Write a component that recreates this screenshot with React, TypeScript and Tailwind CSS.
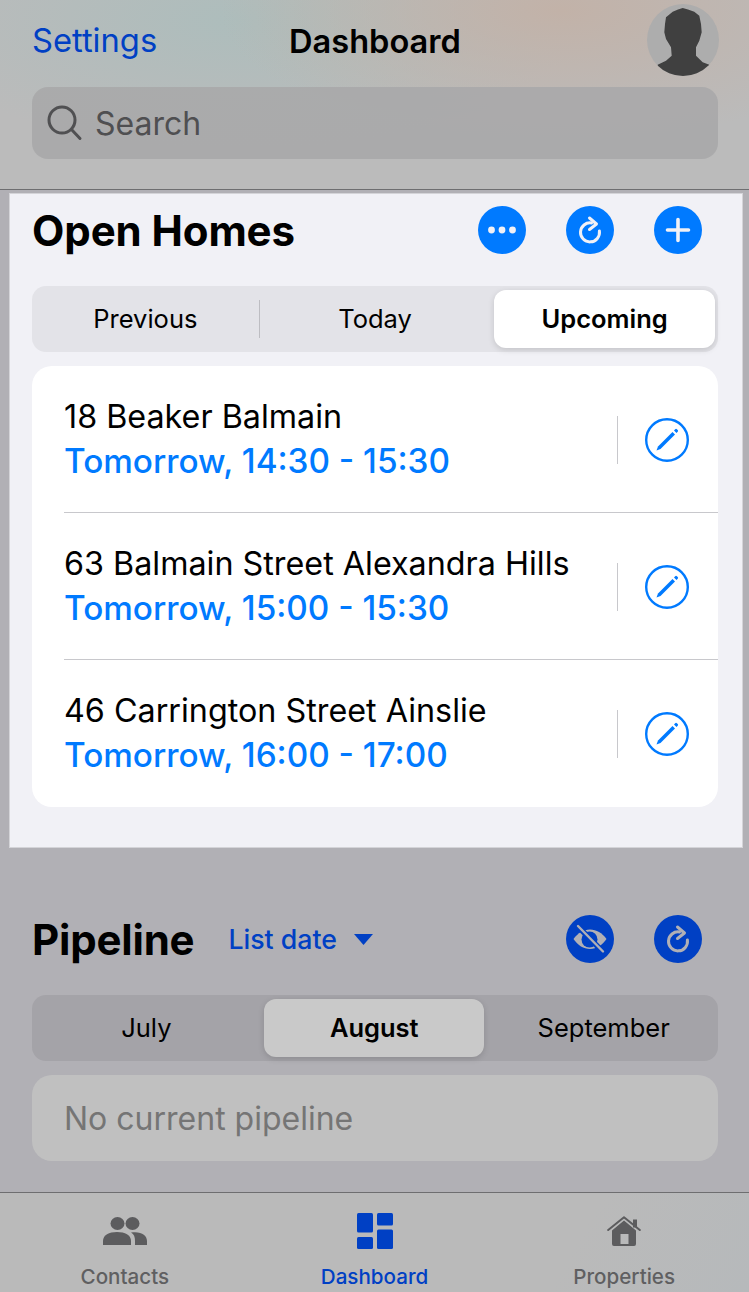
import React from "react";

const font = "font-['Inter','Liberation_Sans',sans-serif]";

const RefreshIcon = ({ color }: { color: string }) => (
  <svg width="48" height="48" viewBox="0 0 48 48" fill="none" stroke={color} strokeWidth="3" strokeLinecap="round" strokeLinejoin="round">
    <path d="M25.500 17A9.500 9.500 0 1 0 33.400 25" />
    <path d="M23.500 12 30.500 18 23.500 23.500" />
  </svg>
);

const DotsIcon = () => (
  <svg width="48" height="48" viewBox="0 0 48 48" fill="#f1f1f6">
    <circle cx="13.500" cy="24" r="3.400" />
    <circle cx="24" cy="24" r="3.400" />
    <circle cx="34.500" cy="24" r="3.400" />
  </svg>
);

const PlusIcon = () => (
  <svg width="48" height="48" viewBox="0 0 48 48" fill="none" stroke="#f1f1f6" strokeWidth="3.600" strokeLinecap="round">
    <path d="M24 13.500v21M13.500 24h21" />
  </svg>
);

const EyeOffIcon = () => (
  <svg width="48" height="48" viewBox="0 0 48 48" fill="none">
    <path d="M7.500 24C12 18 17.500 14.500 24 14.500S36 18 40.500 24C36 30.500 30.500 34 24 34S12 30.500 7.500 24Z" fill="#b1b0b5" />
    <circle cx="23.500" cy="24.500" r="8" fill="#0040c4" />
    <circle cx="23.500" cy="24.500" r="1.800" fill="#b1b0b5" />
    <path d="M12 11.500 37 37" stroke="#0040c4" strokeWidth="5.500" />
    <path d="M12 11 37 36.500" stroke="#b1b0b5" strokeWidth="2.400" strokeLinecap="round" />
  </svg>
);

const RoundButton = ({ bg, children }: { bg: string; children: React.ReactNode }) => (
  <div className={`w-12 h-12 rounded-full ${bg}`}>{children}</div>
);

const EditIcon = () => (
  <svg width="44" height="44" viewBox="0 0 44 44" fill="none" className="mt-[2px]">
    <circle cx="22" cy="22" r="20.800" stroke="#007aff" strokeWidth="2.400" />
    <path d="M11.500 32.500 13 28.500 27.500 14 30 16.500 15.500 31Z" fill="#007aff" />
    <path d="M29 12.500 30.200 11.300a1.200 1.200 0 0 1 1.700 0l.8.8a1.200 1.200 0 0 1 0 1.700L31.500 15Z" fill="#007aff" />
  </svg>
);

const Avatar = () => (
  <div className="w-[72px] h-[72px] rounded-full bg-[#adadad] overflow-hidden">
    <svg width="72" height="72" viewBox="0 0 72 72" fill="#404040">
      <path d="M35.700 4 41 5.500 47.300 7.700 52.300 11.700 54 20 54.700 28.300 52.300 36.700 49 43.300 49 51.700 55.700 58.300 62.300 60.700 62.300 72 10.700 72 10.700 60.700 19 56.700 24.700 51.700 24 43.300 19 35 17.300 28.300 18 20 19 13.300 25.700 7.700 31 5.500Z" />
    </svg>
  </div>
);

const Segmented = ({
  items,
  active,
  track,
  thumb,
  divider,
}: {
  items: string[];
  active: number;
  track: string;
  thumb: string;
  divider?: boolean;
}) => (
  <div className={`h-[66px] rounded-[14px] flex ${track}`}>
    {items.map((label, i) => (
      <div key={label} className="flex flex-1 items-center">
        <div
          className={`h-[58px] flex-1 flex items-center justify-center text-[25.5px] text-black ${
            i === active
              ? `rounded-[12px] font-semibold shadow-[0_2px_6px_rgba(0,0,0,0.14)] ${thumb} ${i === 2 ? "ml-[5px] mr-[3px]" : "ml-[3.5px] mr-[5px]"}`
              : ""
          }`}
        >
          {label}
        </div>
        {divider && i === 0 && <div className="w-px h-[38px] mr-px bg-[#bdbdc2]" />}
      </div>
    ))}
  </div>
);

const rows = [
  { title: "18 Beaker Balmain", time: "Tomorrow, 14:30 - 15:30" },
  { title: "63 Balmain Street Alexandra Hills", time: "Tomorrow, 15:00 - 15:30" },
  { title: "46 Carrington Street Ainslie", time: "Tomorrow, 16:00 - 17:00" },
];

const HomeRow = ({ title, time, last }: { title: string; time: string; last: boolean }) => (
  <div className="h-[147px] pl-[32px]">
    <div className={`h-full flex items-center pr-[29px] border-b ${last ? "border-transparent" : "border-[#c8c8cc]"}`}>
      <div className="flex-1">
        <div className="text-[32.3px] leading-[44px] pt-px text-black">{title}</div>
        <div className="text-[33.3px] leading-[45px] font-medium text-[#007aff]">{time}</div>
      </div>
      <div className="w-px h-12 mt-[2px] bg-[#c8c8cc] mr-[27px]" />
      <EditIcon />
    </div>
  </div>
);

const TabItem = ({ label, active, children }: { label: string; active?: boolean; children: React.ReactNode }) => (
  <div className="flex-1 flex flex-col items-center pt-[10px]">
    <div className="h-[56px] flex items-center justify-center">{children}</div>
    <div className={`text-[20.6px] leading-[26px] mt-[5px] font-medium ${active ? "text-[#0040c4]" : "text-[#5f5f61]"}`}>{label}</div>
  </div>
);

export default function App() {
  return (
    <div className={`${font} w-[749px] h-[1292px] overflow-hidden bg-[#b1b0b5]`}>
      {/* top navigation */}
      <header className="h-[190px] pl-[32px] pr-[31px] pt-px border-b border-[#6e6e70] bg-[radial-gradient(ellipse_340px_130px_at_560px_10px,#c2b2a8,transparent),radial-gradient(ellipse_340px_130px_at_240px_20px,#adbdbc,transparent),linear-gradient(#bbbbbb,#bbbbbb)]">
        <div className="h-[86px] flex items-center justify-between relative">
          <span className="pb-[6px] text-[32.7px] text-[#0040c4]">Settings</span>
          <span className="absolute left-[257px] top-[20px] text-[32.6px] leading-[40px] font-semibold text-black">Dashboard</span>
          <div className="mr-[-1px] mt-[-8px]">
            <Avatar />
          </div>
        </div>
        <div className="h-[72px] rounded-[16px] bg-[#a8a8aa]/90 flex items-center pl-[15px]">
          <svg width="36" height="36" viewBox="0 0 36 36" fill="none" stroke="#505052" strokeWidth="3" strokeLinecap="round">
            <circle cx="15" cy="15" r="13" />
            <path d="M24.500 24.500 33 33.500" />
          </svg>
          <span className="ml-[12px] pt-[2px] text-[32px] text-[#4f4f51]">Search</span>
        </div>
      </header>

      {/* highlighted open homes panel */}
      <section className="mt-[3px] ml-[9px] w-[734px] h-[655px] border border-[#d4d4d8] bg-[#f1f1f6] pl-[22px] pr-[24px]">
        <div className="pt-[12px] h-[60px] flex items-center justify-between">
          <h2 className="text-[42px] font-bold tracking-[-0.1px] text-black">Open Homes</h2>
          <div className="flex gap-10 pr-[16px]">
            <RoundButton bg="bg-[#007aff]"><DotsIcon /></RoundButton>
            <RoundButton bg="bg-[#007aff]"><RefreshIcon color="#f1f1f6" /></RoundButton>
            <RoundButton bg="bg-[#007aff]"><PlusIcon /></RoundButton>
          </div>
        </div>
        <div className="mt-[32px]">
          <Segmented items={["Previous", "Today", "Upcoming"]} active={2} track="bg-[#e3e3e8]" thumb="bg-white" divider />
        </div>
        <div className="mt-[14px] h-[441px] rounded-[20px] bg-white overflow-hidden">
          {rows.map((row, i) => (
            <HomeRow key={row.title} title={row.title} time={row.time} last={i === rows.length - 1} />
          ))}
        </div>
      </section>

      {/* dimmed pipeline section */}
      <section className="pl-[32px] pr-[31px] pt-[67px] pb-[31px]">
        <div className="flex items-center h-12">
          <h2 className="text-[42px] font-bold tracking-[-0.2px] text-black">Pipeline</h2>
          <span className="ml-[34px] pt-px text-[26.7px] font-medium text-[#0040c4]">List date</span>
          <svg className="ml-[17px]" width="19" height="11" viewBox="0 0 19 11" fill="#0040c4">
            <path d="M0 0h19L9.500 11Z" />
          </svg>
          <div className="ml-auto flex gap-10 pr-[16px]">
            <RoundButton bg="bg-[#0040c4]"><EyeOffIcon /></RoundButton>
            <RoundButton bg="bg-[#0040c4]"><RefreshIcon color="#b1b0b5" /></RoundButton>
          </div>
        </div>
        <div className="mt-[32px]">
          <Segmented items={["July", "August", "September"]} active={1} track="bg-[#a4a3a8]" thumb="bg-[#c9c9c9]" />
        </div>
        <div className="mt-[14px] h-[86px] rounded-[20px] bg-[#c0c0c0] flex items-center pl-[32px] pt-px text-[32px] text-[#757575]">
          No current pipeline
        </div>
      </section>

      {/* bottom tab bar */}
      <nav className="h-[100px] flex border-t border-[#6e6e70] bg-[linear-gradient(120deg,#bababa_75%,#b6b9bb)]">
        <TabItem label="Contacts">
          <svg width="44" height="28" viewBox="0 0 44 28" fill="#5c5c5e">
            <ellipse cx="14.500" cy="6.500" rx="7" ry="6.500" />
            <ellipse cx="29.500" cy="6.500" rx="7" ry="6.500" />
            <path d="M0 28V24C0 18 6 15 14 15S28 18 28 24V28Z" />
            <path d="M28 15.500C38 14 44 18 44 24V28H32V24C32 20 31 17 28 15.500Z" />
          </svg>
        </TabItem>
        <TabItem label="Dashboard" active>
          <svg width="36" height="36" viewBox="0 0 36 36" fill="#0040c4">
            <rect x="0" y="0" width="16" height="19.500" rx="1.500" />
            <rect x="20" y="0" width="16" height="12.500" rx="1.500" />
            <rect x="0" y="24" width="16" height="12" rx="1.500" />
            <rect x="20" y="16.500" width="16" height="19.500" rx="1.500" />
          </svg>
        </TabItem>
        <TabItem label="Properties">
          <svg width="34" height="30" viewBox="0 0 34 30" fill="none">
            <path d="M5 14.500 17 4.500 29 14.500V28a2 2 0 0 1-2 2H7a2 2 0 0 1-2-2Z M13.500 18v10h8V18Z" fill="#5c5c5e" fillRule="evenodd" />
            <path d="M1.200 14 17 1.200 32.800 14" stroke="#5c5c5e" strokeWidth="2" strokeLinecap="round" strokeLinejoin="round" />
            <rect x="26" y="3.500" width="4" height="8" fill="#5c5c5e" />
          </svg>
        </TabItem>
      </nav>
    </div>
  );
}
